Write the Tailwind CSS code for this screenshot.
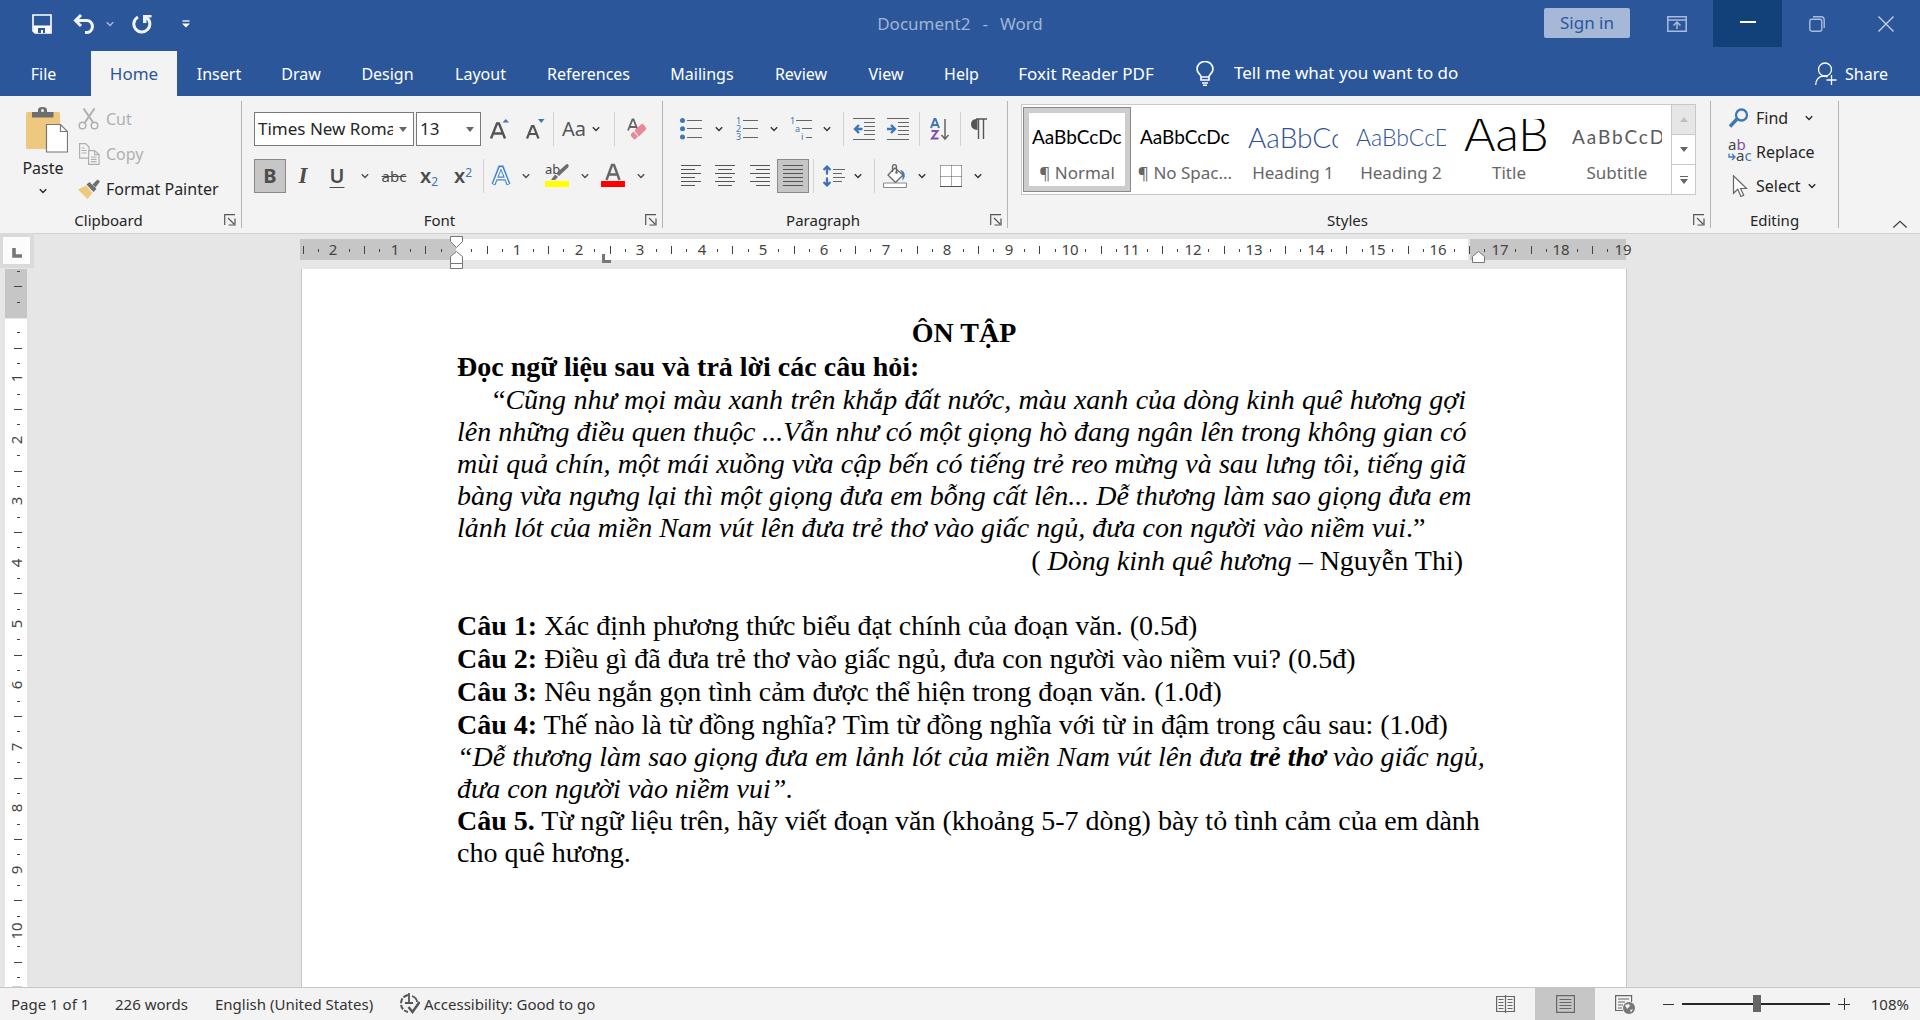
<!DOCTYPE html>
<html lang="en">
<head>
<meta charset="utf-8">
<title>Document2 - Word</title>
<script src="https://cdn.jsdelivr.net/npm/@tailwindcss/browser@4"></script>
</head>
<body class="h-screen overflow-hidden flex flex-col bg-[#e6e6e6] text-[#262626] text-[16px] leading-5 font-['Noto_Sans',sans-serif]">

<svg class="hidden">
  <symbol id="chev" viewBox="0 0 8 6"><path d="M.8 1.2 4 4.4 7.2 1.2" fill="none" stroke="currentColor" stroke-width="1.4"/></symbol>
  <symbol id="launch" viewBox="0 0 12 12"><path d="M.7 11V.7H11M4 4l6 6M11 4.5V11H4.5" fill="none" stroke="#555" stroke-width="1.2"/></symbol>
</svg>

<header class="bg-[#2b579a] text-white">
  <div class="h-[51px] flex items-start">
    <div class="flex-1 flex items-center h-[48px]">
      <button aria-label="Save" class="ml-8"><svg class="w-5 h-5" viewBox="0 0 20 20"><path d="M1 1h18v18H3l-2-2z" fill="none" stroke="#fff" stroke-width="1.6"/><path d="M1.5 11.500H18.500V19H3L1.500 17z" fill="#fff"/><path d="M6 19v-5h7v5h-2v-3H9v3z" fill="#2b579a"/></svg></button>
      <button aria-label="Undo" class="ml-[21px]"><svg class="w-[22px] h-5" viewBox="0 0 22 20"><path d="M8 1 2.500 6.500 8 12M3 6.500h11a5 5.500 0 0 1 0 12h-2" fill="none" stroke="#f0f3f8" stroke-width="3"/></svg></button>
      <button aria-label="Undo options" class="ml-[11px]"><svg class="w-2 h-1.5 text-[#a9bcdb]"><use href="#chev"/></svg></button>
      <button aria-label="Redo" class="ml-[18px]"><svg class="w-5 h-5" viewBox="0 0 20 20"><path d="M6 3a8 8 0 1 0 8.500.5" fill="none" stroke="#f0f3f8" stroke-width="3"/><path d="M11 1h8.500v2.500h-5V9H11z" fill="#f0f3f8"/></svg></button>
      <button aria-label="Customize Quick Access Toolbar" class="ml-[30px]"><svg class="w-2 h-2" viewBox="0 0 8 8"><path d="M.5 1h7" stroke="#fff" stroke-width="1.300"/><path d="M0 3.500h8L4 7.500z" fill="#fff"/></svg></button>
    </div>
    <div class="h-[48px] flex items-center gap-3 text-[17px] text-[#a0b4d5]"><span>Document2</span><span>-</span><span>Word</span></div>
    <div class="flex-1 flex justify-end">
      <button class="w-[86px] h-[30px] mt-2 mr-[11px] rounded-xs bg-[#a5b8d8] text-[#2b579a] text-[17px]">Sign in</button>
      <button aria-label="Ribbon display options" class="w-[72px] h-[47px] flex items-center justify-center"><svg class="w-5 h-4" viewBox="0 0 20 16"><path d="M.8.800h18.400v14.400H.8zM1 4h18M10 13V6.500M6.500 9.500 10 6l3.500 3.500" fill="none" stroke="#a9bcdb" stroke-width="1.500"/></svg></button>
      <button aria-label="Minimize" class="w-[69px] h-[47px] bg-[#124078] flex items-center justify-center"><span class="w-4 h-0.5 mb-1 bg-white"></span></button>
      <button aria-label="Restore" class="w-[69px] h-[47px] flex items-center justify-center"><svg class="w-4 h-4" viewBox="0 0 16 16"><rect x=".8" y="3.200" width="12" height="12" rx="2" fill="none" stroke="#a9bcdb" stroke-width="1.400"/><path d="M4 .8h8a3.200 3.200 0 0 1 3.200 3.200v8" fill="none" stroke="#a9bcdb" stroke-width="1.400"/></svg></button>
      <button aria-label="Close" class="w-[69px] h-[47px] flex items-center justify-center"><svg class="w-4 h-4" viewBox="0 0 16 16"><path d="M.5.500l15 15M15.500.500l-15 15" stroke="#c3d0e5" stroke-width="1.400"/></svg></button>
    </div>
  </div>
  <nav class="h-[45px] flex items-center">
    <button class="w-[91px] h-full pr-1">File</button>
    <button class="w-[86px] h-full bg-[#f3f3f3] text-[#2b579a] text-[17px]">Home</button>
    <button class="w-[84px] h-full">Insert</button>
    <button class="w-[80px] h-full">Draw</button>
    <button class="w-[93px] h-full">Design</button>
    <button class="w-[93px] h-full">Layout</button>
    <button class="w-[123px] h-full">References</button>
    <button class="w-[104px] h-full">Mailings</button>
    <button class="w-[94px] h-full">Review</button>
    <button class="w-[76px] h-full">View</button>
    <button class="w-[75px] h-full">Help</button>
    <button class="w-[174px] h-full whitespace-nowrap text-[17px]">Foxit Reader PDF</button>
    <label for="tell" class="pl-[23px] pr-5"><svg class="w-[18px] h-[25px]" viewBox="0 0 18 25"><path d="M5 19v-3.500C4.500 13 1 12 1 8a8 7.500 0 0 1 16 0c0 4-3.500 5-4 7.500V19zM5 16h8M6 22h6M7 24.200h4" fill="none" stroke="#fff" stroke-width="1.600"/></svg></label>
    <input id="tell" aria-label="Tell me" placeholder="Tell me what you want to do" class="w-[260px] h-full pb-0.5 text-[17px] bg-transparent outline-none placeholder:text-white">
    <button class="ml-auto mr-8 flex items-center gap-2"><svg class="w-[22px] h-6" viewBox="0 0 22 24"><circle cx="10" cy="7.500" r="6.500" fill="none" stroke="#fff" stroke-width="1.300"/><path d="M.7 23c0-5 3-9 8-9 2 0 3 .5 4 1M16.500 13v10M11.500 18h10" fill="none" stroke="#fff" stroke-width="1.300"/></svg>Share</button>
  </nav>
</header>

<section aria-label="Ribbon" class="h-[138px] flex bg-[#f3f3f3] border-b border-[#d0d0d0] py-[5px]">
  <div class="w-[242px] border-r border-[#b5b5b5] flex flex-col">
    <div class="flex h-[105px] pl-5">
      <button class="w-[50px] flex flex-col items-center pt-1.5"><svg class="w-[42px] h-[46px] ml-1" viewBox="0 0 42 46"><rect y="5" width="34" height="37" rx="1.500" fill="#edc87e"/><path d="M6 5h6V3q0-3 4.500-3T21 3v2h6.500v5.500H6z" fill="#6e6e6e"/><circle cx="16.500" cy="3.500" r="1.500" fill="#f3f3f3"/><path d="M20.500 17.500h14l7 7v20.500h-21z" fill="#fff" stroke="#777" stroke-width="1.200"/><path d="M34.500 17.500v7h7" fill="none" stroke="#777" stroke-width="1.200"/></svg>
        <span class="mt-[5px] mr-1">Paste</span><svg class="w-2 h-1.5 mt-2.5 mr-1"><use href="#chev"/></svg></button>
      <div class="flex flex-col pl-2 pt-px">
        <button class="h-[35px] flex items-center gap-1.5 text-[#b0b0b0]"><svg class="w-[22px] h-[22px]" viewBox="0 0 22 22"><path d="M5.500.500 15.500 15M16.500.500 6.500 15" stroke="#b0b0b0" stroke-width="2"/><circle cx="4.500" cy="17.500" r="3.300" fill="none" stroke="#b0b0b0" stroke-width="1.500"/><circle cx="16.500" cy="17.500" r="3.300" fill="none" stroke="#b0b0b0" stroke-width="1.500"/></svg>Cut</button>
        <button class="h-[35px] flex items-center gap-1.5 text-[#b0b0b0]"><svg class="w-[22px] h-[22px]" viewBox="0 0 22 22"><g fill="#f3f3f3" stroke="#b0b0b0" stroke-width="1.200"><path d="M1.600.600h6l3.500 3.500v11H1.600z"/><path d="M10.600 7.600h6l4.500 4v9.800H10.600zM16.600 7.600v4h4.500M13 14h5.500M13 16.300h5.500M13 18.600h5.500M3.500 5h3M3.500 7.500h5M3.500 10h5"/></g></svg>Copy</button>
        <button class="h-[35px] flex items-center gap-1.5 whitespace-nowrap"><svg class="w-[22px] h-[22px]" viewBox="0 0 22 22"><path d="M0 11.500 8 7.500l6.500 7.500L9.500 21z" fill="#edc87e"/><path d="m8.500 6.500 3-2.500 7 7-3 3z" fill="#6e6e6e"/><path d="m14.500 6.500 5-5 2.500 2-4.500 6z" fill="#6e6e6e"/></svg>Format Painter</button>
      </div>
    </div>
    <div class="flex items-center h-4 mt-1.5 pr-[5px] text-[15px]"><span class="flex-1 text-center pl-[5px] pr-3">Clipboard</span><button aria-label="Clipboard settings"><svg class="w-3 h-3"><use href="#launch"/></svg></button></div>
  </div>

  <div class="w-[421px] border-r border-[#b5b5b5] flex flex-col pl-3">
    <div class="flex flex-col gap-[13px] h-[105px] pt-[11px]">
      <div class="flex h-[34px]">
        <div class="w-[160px] mr-0.5 bg-white border border-[#7a7a7a] flex items-center pl-[3px] pr-1.5"><select aria-label="Font" class="flex-1 min-w-0 text-[17px] appearance-none outline-none bg-transparent text-clip"><option>Times New Roman</option></select><svg class="w-2 h-[5px] ml-1.5" viewBox="0 0 8 5"><path d="M0 0h8L4 5z" fill="#666"/></svg></div>
        <div class="w-[65px] bg-white border border-[#7a7a7a] flex items-center pl-[3px] pr-1.5"><select aria-label="Font size" class="flex-1 min-w-0 text-[17px] appearance-none outline-none bg-transparent"><option>13</option></select><svg class="w-2 h-[5px]" viewBox="0 0 8 5"><path d="M0 0h8L4 5z" fill="#666"/></svg></div>
        <button aria-label="Increase font size" class="w-[37px] flex items-center justify-center"><svg class="w-5 h-5" viewBox="0 0 20 20"><path d="m1 19.500 6-15h2l6 15M3.500 14.500h9" fill="none" stroke="#555" stroke-width="2.400"/><path d="M12.500 3.500h6.500L15.800 0z" fill="#3c78b4"/></svg></button>
        <button aria-label="Decrease font size" class="w-[34px] flex items-center justify-center"><svg class="w-5 h-5" viewBox="0 0 20 20"><path d="m2 19.500 5-12.500h1.500l5 12.500M4 15h8" fill="none" stroke="#555" stroke-width="2.200"/><path d="M13 0h6.500l-3.200 4z" fill="#3c78b4"/></svg></button>
        <span class="w-0.5 flex justify-center"><span class="w-px bg-[#d2d2d2]"></span></span>
        <button aria-label="Change case" class="w-[54px] flex items-center justify-center gap-1.5 text-[20px] text-[#555]">Aa<svg class="w-2 h-1.5 text-[#333]"><use href="#chev"/></svg></button>
        <span class="w-3 flex justify-center"><span class="w-px bg-[#d2d2d2]"></span></span>
        <button aria-label="Clear formatting" class="w-[34px] flex items-center justify-center"><svg class="w-5 h-[22px]" viewBox="0 0 20 22"><path d="m1 12.500 4.500-11h1l4 10M3 9h6" fill="none" stroke="#666" stroke-width="1.800"/><path d="m7.500 12.500 7-6.500q1.500-.5 2 .5l2.500 3q.5 1 0 2l-7 7z" fill="#e8899a"/><path d="m6.500 13.500-2.500 2.500q-.5 1 0 2l2.500 3q1 .5 2 0l2.500-2.500z" fill="#e8899a"/></svg></button>
      </div>
      <div class="flex h-[34px] text-[#4d4d4d]">
        <button aria-label="Bold" class="w-8 bg-[#c6c6c6] border border-[#8a8a8a] text-[20px] font-bold">B</button>
        <button aria-label="Italic" class="w-[34px] text-[23px] font-bold italic font-['Liberation_Serif',serif]">I</button>
        <button aria-label="Underline" class="w-[34px] text-[20px] font-semibold underline underline-offset-4 decoration-1">U</button>
        <button aria-label="Underline options" class="w-[22px] flex items-center justify-center"><svg class="w-2 h-1.5"><use href="#chev"/></svg></button>
        <button aria-label="Strikethrough" class="w-9 text-[15px] line-through">abc</button>
        <button aria-label="Subscript" class="w-[34px] text-[20px] font-semibold">x<sub class="text-[12px] font-normal text-[#3c78b4]">2</sub></button>
        <button aria-label="Superscript" class="w-[34px] text-[20px] font-semibold">x<sup class="text-[12px] font-normal text-[#3c78b4]">2</sup></button>
        <span class="w-1.5 flex justify-center"><span class="w-px bg-[#d2d2d2]"></span></span>
        <button aria-label="Text effects" class="w-[30px] flex items-center justify-center"><svg class="w-5 h-[22px]" viewBox="0 0 20 22"><path d="m2.500 19.500 6.500-17h2l6.500 17M5.500 13.500h9" fill="none" stroke="#b7d1ee" stroke-width="5"/><path d="m2.500 19.500 6.500-17h2l6.500 17M5.500 13.500h9" fill="none" stroke="#3d7cc4" stroke-width="3.600"/><path d="m2.800 19 6.400-16h1.600l6.400 16M5.500 13.500h9" fill="none" stroke="#fff" stroke-width="1.600"/></svg></button>
        <button aria-label="Text effects options" class="w-5 flex items-center justify-center"><svg class="w-2 h-1.5"><use href="#chev"/></svg></button>
        <button aria-label="Highlight" class="w-[42px] flex flex-col items-center pt-1"><svg class="w-6 h-6" viewBox="0 0 24 24"><text x="0" y="11" class="text-[13px] fill-[#444]">ab</text><path d="M21 1.500q2-1 2.500.5t-.5 2.500L14 13l-3-2.500z" fill="#6e6e6e"/><path d="m10 11.500 3 2.500-3 3H6z" fill="#6e6e6e"/><path d="M0 18h24v6H0z" fill="#ff0"/></svg></button>
        <button aria-label="Highlight options" class="w-3.5 flex items-center justify-center"><svg class="w-2 h-1.5"><use href="#chev"/></svg></button>
        <button aria-label="Font color" class="w-[42px] flex flex-col items-center pt-1"><svg class="w-6 h-6" viewBox="0 0 24 24"><path d="m5.500 17 5.500-15h2l5.500 15M7.500 11.500h9" fill="none" stroke="#666" stroke-width="2.400"/><path d="M0 18h24v6H0z" fill="#f00"/></svg></button>
        <button aria-label="Font color options" class="w-3.5 flex items-center justify-center"><svg class="w-2 h-1.5"><use href="#chev"/></svg></button>
      </div>
    </div>
    <div class="flex items-center h-4 mt-1.5 pr-[5px] text-[15px]"><span class="flex-1 text-center pr-5">Font</span><button aria-label="Font settings"><svg class="w-3 h-3"><use href="#launch"/></svg></button></div>
  </div>

  <div class="w-[345px] border-r border-[#b5b5b5] flex flex-col pl-3">
    <div class="flex flex-col gap-[13px] h-[105px] pt-[11px]">
      <div class="flex h-[34px] text-[#333]">
        <button aria-label="Bullets" class="w-8 flex items-center justify-center"><svg class="w-[22px] h-[22px]" viewBox="0 0 22 22"><g fill="#3c78b4"><circle cx="2.500" cy="2.500" r="2.500"/><circle cx="2.500" cy="10.700" r="2.500"/><circle cx="2.500" cy="19" r="2.500"/></g><path d="M7 2.500h15M7 10.500h15M7 19.500h15" stroke="#666"/></svg></button>
        <button aria-label="Bullet options" class="w-6 flex items-center justify-center"><svg class="w-2 h-1.5"><use href="#chev"/></svg></button>
        <button aria-label="Numbering" class="w-8 flex items-center justify-center"><svg class="w-[22px] h-[22px] overflow-visible" viewBox="0 0 22 22"><g class="text-[9px] fill-[#3c78b4]"><text y="6">1</text><text y="14">2</text><text y="22">3</text></g><path d="M7 2.500h15M7 10.500h15M7 19.500h15" stroke="#666"/></svg></button>
        <button aria-label="Numbering options" class="w-[22px] flex items-center justify-center"><svg class="w-2 h-1.5"><use href="#chev"/></svg></button>
        <button aria-label="Multilevel list" class="w-8 flex items-center justify-center"><svg class="w-[22px] h-[22px] overflow-visible" viewBox="0 0 22 22"><g class="text-[9px] fill-[#3c78b4]"><text y="6">1</text><text x="5" y="14">a</text><text x="11" y="22">i</text></g><path d="M6 2.500h16M12 10.500h10M16 19.500h6" stroke="#666"/></svg></button>
        <button aria-label="Multilevel options" class="w-5 flex items-center justify-center"><svg class="w-2 h-1.5"><use href="#chev"/></svg></button>
        <span class="w-3 flex justify-center"><span class="w-px bg-[#d2d2d2]"></span></span>
        <button aria-label="Decrease indent" class="w-[30px] flex items-center justify-center"><svg class="w-[22px] h-[22px]" viewBox="0 0 22 22"><path d="M0 .5h22M11 4.500h11M11 8.500h11M11 12.500h11M11 16.500h11M0 21.500h22" stroke="#666"/><path d="M9.500 11H2M6 7l-4 4 4 4" fill="none" stroke="#3c78b4" stroke-width="2.400"/></svg></button>
        <button aria-label="Increase indent" class="w-[38px] flex items-center justify-center"><svg class="w-[22px] h-[22px]" viewBox="0 0 22 22"><path d="M0 .5h22M11 4.500h11M11 8.500h11M11 12.500h11M11 16.500h11M0 21.500h22" stroke="#666"/><path d="M0 11h7.500M4 7l4 4-4 4" fill="none" stroke="#3c78b4" stroke-width="2.400"/></svg></button>
        <span class="w-1 flex justify-center"><span class="w-px bg-[#d2d2d2]"></span></span>
        <button aria-label="Sort" class="w-[38px] flex items-center justify-center"><svg class="w-5 h-6" viewBox="0 0 20 24"><path d="m1 11 3.500-9h1L9 11M2.500 8h5" fill="none" stroke="#3c78b4" stroke-width="2"/><path d="M1.500 14h6l-5.500 7.500h6.500" fill="none" stroke="#8250a8" stroke-width="2"/><path d="M15 2v20M11.500 18l3.500 4 3.500-4" fill="none" stroke="#666" stroke-width="1.500"/></svg></button>
        <span class="w-0.5 flex justify-center"><span class="w-px bg-[#d2d2d2]"></span></span>
        <button aria-label="Show formatting marks" class="w-9 flex items-center justify-center"><svg class="w-4 h-[22px]" viewBox="0 0 16 22"><path d="M6.500 1v11Q0 11.500 0 6.200T6.500 1z" fill="#555"/><path d="M5 1h11M7.500 1v20M12.500 1v20" stroke="#555" stroke-width="1.400"/></svg></button>
      </div>
      <div class="flex h-[34px] text-[#333]">
        <button aria-label="Align left" class="w-8 flex items-center justify-center"><svg class="w-5 h-[22px]" viewBox="0 0 20 22"><path d="M0 .5h20M0 4.500h14M0 8.500h20M0 12.500h14M0 16.500h20M0 20.500h14" stroke="#555"/></svg></button>
        <button aria-label="Center" class="w-9 flex items-center justify-center"><svg class="w-5 h-[22px]" viewBox="0 0 20 22"><path d="M0 .5h20M3 4.500h14M0 8.500h20M3 12.500h14M0 16.500h20M3 20.500h14" stroke="#555"/></svg></button>
        <button aria-label="Align right" class="w-[34px] flex items-center justify-center"><svg class="w-5 h-[22px]" viewBox="0 0 20 22"><path d="M0 .5h20M6 4.500h14M0 8.500h20M6 12.500h14M0 16.500h20M6 20.500h14" stroke="#555"/></svg></button>
        <button aria-label="Justify" class="w-8 flex items-center justify-center bg-[#c6c6c6] border border-[#8a8a8a]"><svg class="w-5 h-[22px]" viewBox="0 0 20 22"><path d="M0 .5h20M0 4.500h20M0 8.500h20M0 12.500h20M0 16.500h20M0 20.500h20" stroke="#555"/></svg></button>
        <span class="w-2 flex justify-center"><span class="w-px bg-[#d2d2d2]"></span></span>
        <button aria-label="Line spacing" class="w-[34px] flex items-center justify-center"><svg class="w-[22px] h-[22px]" viewBox="0 0 22 22"><path d="M4 9.500V2M.5 5 4 1.500 7.500 5M4 12.500V20M.5 17 4 20.500 7.500 17" fill="none" stroke="#3f6fb8" stroke-width="2.200"/><path d="M10 4.500h12M10 8.500h9M10 12.500h12M10 16.500h9" stroke="#666"/></svg></button>
        <button aria-label="Line spacing options" class="w-3.5 flex items-center justify-center"><svg class="w-2 h-1.5"><use href="#chev"/></svg></button>
        <span class="w-[18px] flex justify-center"><span class="w-px bg-[#d2d2d2]"></span></span>
        <button aria-label="Shading" class="w-6 flex items-center justify-center"><svg class="w-6 h-6" viewBox="0 0 24 24"><path d="M12 4 20 11l-7.500 7.500L5 11z" fill="#fff" stroke="#666" stroke-width="1.300"/><path d="M9.500 8V3q0-2.300 2-2.300T13.500 3v5" fill="none" stroke="#666" stroke-width="1.300"/><circle cx="13.500" cy="8.500" r="1.300" fill="#666"/><path d="M17 6q5 .5 4.800 6.500l-2.300 4.500V10z" fill="#3c78b4"/><path d="M.5 19h23v4.500H.5z" fill="#fff" stroke="#888"/></svg></button>
        <button aria-label="Shading options" class="w-[30px] flex items-center justify-center"><svg class="w-2 h-1.5"><use href="#chev"/></svg></button>
        <button aria-label="Borders" class="w-7 flex items-center justify-center"><svg class="w-[22px] h-[22px]" viewBox="0 0 22 22"><path d="M1 1h20v20H1z" fill="#fff"/><path d="M.5.500h21M.5.500v21M21.500.500v21M11.500 .5v21M.5 11.500h21" fill="none" stroke="#555" stroke-dasharray="1 1"/><path d="M0 21.500h22" stroke="#555"/></svg></button>
        <button aria-label="Border options" class="w-[26px] flex items-center justify-center"><svg class="w-2 h-1.5"><use href="#chev"/></svg></button>
      </div>
    </div>
    <div class="flex items-center h-4 mt-1.5 pr-[5px] text-[15px]"><span class="flex-1 text-center pr-[19px]">Paragraph</span><button aria-label="Paragraph settings"><svg class="w-3 h-3"><use href="#launch"/></svg></button></div>
  </div>

  <div class="w-[703px] border-r border-[#b5b5b5] flex flex-col pl-[13px]">
    <div class="h-[105px] pt-[3px]">
      <div class="h-[91px] w-[675px] flex bg-white border border-[#c8c8c8] text-[17px] text-[#666]">
        <button class="w-[108px] h-[85px] my-0.5 ml-px border border-[#8a8a8a] bg-[#cfcdcb] p-[5px]"><span class="h-full bg-white flex flex-col items-center gap-2 pt-1.5"><span class="h-9 w-[90px] overflow-hidden whitespace-nowrap flex items-center text-left text-[19px] text-black font-['Lato',sans-serif]">AaBbCcDc</span><span class="whitespace-nowrap">¶ Normal</span></span></button>
        <button class="w-[108px] flex flex-col items-center gap-2 pt-3.5"><span class="h-9 w-[90px] overflow-hidden whitespace-nowrap flex items-center text-[19px] text-black font-['Lato',sans-serif]">AaBbCcDc</span><span class="whitespace-nowrap">¶ No Spac...</span></button>
        <button class="w-[108px] flex flex-col items-center gap-2 pt-3.5"><span class="h-9 w-[90px] overflow-hidden whitespace-nowrap flex items-center text-[28px] text-[#2f5496] font-light font-['Lato',sans-serif]">AaBbCc</span><span>Heading 1</span></button>
        <button class="w-[108px] flex flex-col items-center gap-2 pt-3.5"><span class="h-9 w-[90px] overflow-hidden whitespace-nowrap flex items-center text-[23px] text-[#2f5496] font-light font-['Lato',sans-serif]">AaBbCcD</span><span>Heading 2</span></button>
        <button class="w-[108px] flex flex-col items-center gap-2 pt-3.5"><span class="h-9 w-[90px] overflow-hidden whitespace-nowrap flex items-end text-[48px] leading-11 text-black font-light font-['Lato',sans-serif]">AaB</span><span>Title</span></button>
        <button class="w-[108px] flex flex-col items-center gap-2 pt-3.5"><span class="h-9 w-[90px] overflow-hidden whitespace-nowrap flex items-center text-[19px] tracking-widest text-[#5a5a5a] font-['Lato',sans-serif]">AaBbCcD</span><span>Subtitle</span></button>
        <div class="flex-1 flex flex-col border-l border-[#c8c8c8]">
          <button aria-label="Scroll up" class="flex-1 flex items-center justify-center bg-[#e6e6e6]"><svg class="w-2 h-[5px]" viewBox="0 0 8 5"><path d="M0 5h8L4 0z" fill="#c0c0c0"/></svg></button>
          <button aria-label="Scroll down" class="flex-1 flex items-center justify-center border-y border-[#c8c8c8]"><svg class="w-2 h-[5px]" viewBox="0 0 8 5"><path d="M0 0h8L4 5z" fill="#666"/></svg></button>
          <button aria-label="More styles" class="flex-1 flex items-center justify-center"><svg class="w-2 h-2" viewBox="0 0 8 8"><path d="M0 .5h8" stroke="#666"/><path d="M0 3h8L4 8z" fill="#666"/></svg></button>
        </div>
      </div>
    </div>
    <div class="flex items-center h-4 mt-1.5 pr-[5px] text-[15px]"><span class="flex-1 text-center pr-[19px]">Styles</span><button aria-label="Styles settings"><svg class="w-3 h-3"><use href="#launch"/></svg></button></div>
  </div>

  <div class="w-[128px] border-r border-[#b5b5b5] flex flex-col pl-[17px]">
    <div class="h-[105px] flex flex-col">
      <button class="h-[33px] flex items-center"><svg class="w-[22px] h-5 mr-1.5" viewBox="0 0 22 20"><circle cx="13.500" cy="7" r="5.500" fill="none" stroke="#3c78b4" stroke-width="2.300"/><path d="m9 11-7 7.500" stroke="#3c78b4" stroke-width="3.400"/></svg>Find<svg class="w-2 h-1.5 ml-[17px]"><use href="#chev"/></svg></button>
      <button class="h-[35px] flex items-center"><svg class="w-6 h-6 mr-1 overflow-visible" viewBox="0 0 24 24"><g class="text-[15px]"><text y="10" class="fill-[#444]">a<tspan class="fill-[#8250a8]">b</tspan></text><text x="8" y="21" class="fill-[#444]">a<tspan class="fill-[#3c78b4]">c</tspan></text></g><path d="M1 13.500v3.500h5M4 14l3 3-3 3" fill="none" stroke="#3c78b4" stroke-width="1.300"/></svg>Replace</button>
      <button class="h-[33px] flex items-center"><svg class="w-[22px] h-[22px] mr-1.5" viewBox="0 0 22 22"><path d="M5.500.800v17.500l4.200-4 3.300 7.200 2.700-1.300-3.200-6.700h6z" fill="#fff" stroke="#666" stroke-width="1.200"/></svg>Select<svg class="w-2 h-1.5 ml-2"><use href="#chev"/></svg></button>
    </div>
    <div class="h-4 mt-1.5 leading-4 text-center text-[15px] pr-[17px]">Editing</div>
  </div>
  <button aria-label="Collapse the ribbon" class="ml-auto mr-3 mt-auto"><svg class="w-4 h-2" viewBox="0 0 16 9"><path d="m.5 8.500 7.500-7 7.500 7" fill="none" stroke="#444" stroke-width="1.500"/></svg></button>
</section>

<div class="h-[35px] flex pl-[3px] pr-[22px]">
  <button aria-label="Tab selector" class="w-[27px] h-[27px] mt-[3px] pt-1 bg-[#fcfcfc] outline-4 outline-[#dadada] flex items-center justify-center"><svg class="w-2.5 h-2.5" viewBox="0 0 10 10"><path d="M2 0v8h8" fill="none" stroke="#777" stroke-width="3.600"/></svg></button>
  <div class="flex-1"><svg id="hruler" class="block mx-auto w-[1326px] h-[35px] overflow-visible fill-[#444] text-[15px]" viewBox="0 0 1326 35"></svg></div>
</div>

<main class="flex-1 min-h-0 flex">
  <div class="w-[27px] pl-[5px] overflow-hidden"><svg id="vruler" class="block w-[22px] h-[760px] fill-[#444] text-[15px]" viewBox="0 0 22 760"></svg></div>
  <div class="flex-1 pr-[19px] overflow-hidden flex justify-center">
    <article lang="vi" class="w-[1326px] min-h-full bg-white border-x border-[#c6c6c6] pt-12 px-[155px] text-black text-[28px] leading-8 whitespace-nowrap font-['Liberation_Serif',serif]">
      <h1 class="text-center font-bold mb-0.5">ÔN TẬP</h1>
      <h2 class="font-bold mb-px">Đọc ngữ liệu sau và trả lời các câu hỏi:</h2>
      <p class="w-[1009px] mb-px">
        <span class="block pl-9 [text-align-last:justify]">“<i>Cũng như mọi màu xanh trên khắp đất nước, màu xanh của dòng kinh quê hương gợi</i></span>
        <i class="block [text-align-last:justify]">lên những điều quen thuộc ...Vẫn như có một giọng hò đang ngân lên trong không gian có</i>
        <i class="block [text-align-last:justify]">mùi quả chín, một mái xuồng vừa cập bến có tiếng trẻ reo mừng và sau lưng tôi, tiếng giã</i>
        <i class="block [text-align-last:justify]">bàng vừa ngưng lại thì một giọng đưa em bỗng cất lên... Dễ thương làm sao giọng đưa em</i>
        <span class="block"><i>lảnh lót của miền Nam vút lên đưa trẻ thơ vào giấc ngủ, đưa con người vào niềm vui</i>.”</span>
      </p>
      <p class="w-[1006px] text-right mb-[33px]">( <i>Dòng kinh quê hương</i> – Nguyễn Thi)</p>
      <div class="space-y-px">
        <p><b>Câu 1:</b> Xác định phương thức biểu đạt chính của đoạn văn. (0.5đ)</p>
        <p><b>Câu 2:</b> Điều gì đã đưa trẻ thơ vào giấc ngủ, đưa con người vào niềm vui? (0.5đ)</p>
        <p><b>Câu 3:</b> Nêu ngắn gọn tình cảm được thể hiện trong đoạn văn<i>.</i> (1.0đ)</p>
        <p><b>Câu 4:</b> Thế nào là từ đồng nghĩa? Tìm từ đồng nghĩa với từ in đậm trong câu sau: (1.0đ)</p>
      </div>
      <p><i>“Dễ thương làm sao giọng đưa em lảnh lót của miền Nam vút lên đưa <b>trẻ thơ</b> vào giấc ngủ,<br>đưa con người vào niềm vui”.</i></p>
      <p><b>Câu 5.</b> Từ ngữ liệu trên, hãy viết đoạn văn (khoảng 5-7 dòng) bày tỏ tình cảm của em dành<br>cho quê hương.</p>
    </article>
  </div>
</main>

<footer class="h-[33px] flex items-center bg-[#f3f3f3] border-t border-[#c6c6c6] pl-[11px] pr-[11px] text-[15px] text-[#333] whitespace-nowrap">
  <button class="w-[104px] text-left">Page 1 of 1</button>
  <button class="w-[100px] text-left">226 words</button>
  <button class="w-[185px] text-left">English (United States)</button>
  <button class="flex items-center gap-1"><svg class="w-5 h-[22px]" viewBox="0 0 20 22"><path d="M8 2Q1 4 1 10.500T8 19" fill="none" stroke="#555" stroke-width="2" stroke-dasharray="5 1.500"/><path d="M9 0v11M5 10h8M12 3q5 2 5 6" fill="none" stroke="#555" stroke-width="1.800"/><path d="m8.500 14 4 5 7-10" fill="none" stroke="#555" stroke-width="2.400"/></svg>Accessibility: Good to go</button>
  <div class="ml-auto flex items-center h-full">
    <button aria-label="Read mode" class="w-[59px] h-full flex items-center justify-center"><svg class="w-[19px] h-[18px]" viewBox="0 0 19 18"><path d="M9.500 1.500H.6v15h8.900h8.900v-15zM9.500 0v18M2.500 4.500h5M2.500 7.500h5M2.500 10.500h5M2.500 13.500h5M11.500 4.500h5M11.500 7.500h5M11.500 10.500h5M11.500 13.500h5" fill="none" stroke="#666" stroke-width="1.200"/></svg></button>
    <button aria-label="Print layout" class="w-[60px] h-full flex items-center justify-center bg-[#c6c6c6]"><svg class="w-[19px] h-[18px]" viewBox="0 0 19 18"><path d="M.6.600h17.800v16.800H.6zM3.500 4.500h12M3.500 7.500h12M3.500 10.500h12M3.500 13.500h12" fill="none" stroke="#666" stroke-width="1.200"/></svg></button>
    <button aria-label="Web layout" class="w-[60px] h-full flex items-center justify-center"><svg class="w-5 h-[19px]" viewBox="0 0 20 19"><path d="M8 15.500H.6V.600h16V7M3 4h11M3 7h7M3 10h5M3 13h4" fill="none" stroke="#666" stroke-width="1.200"/><circle cx="14" cy="13" r="6" fill="#777"/><path d="m10 10 4-1 1 2-3 3zM15 15l3-1-2 3.500z" fill="#f3f3f3"/></svg></button>
    <button aria-label="Zoom out" class="w-3 ml-[7px] flex justify-center"><span class="w-[11px] h-px bg-[#333]"></span></button>
    <input type="range" aria-label="Zoom" min="0" max="100" value="51" class="w-[148px] h-[18px] mx-2 appearance-none bg-transparent [&::-webkit-slider-runnable-track]:h-0.5 [&::-webkit-slider-runnable-track]:bg-[#262626] [&::-webkit-slider-thumb]:appearance-none [&::-webkit-slider-thumb]:w-2 [&::-webkit-slider-thumb]:h-[17px] [&::-webkit-slider-thumb]:-mt-2 [&::-webkit-slider-thumb]:bg-[#666]">
    <button aria-label="Zoom in" class="w-3"><svg class="w-3 h-3" viewBox="0 0 12 12"><path d="M0 6.500h12M6.500 0v12" stroke="#333"/></svg></button>
    <button class="w-[59px] text-right">108%</button>
  </div>
</footer>

<script>
const NS = 'http://www.w3.org/2000/svg';
const CM = 61.4;
function add(svg, tag, attrs, text) {
  const el = document.createElementNS(NS, tag);
  for (const k in attrs) el.setAttribute(k, attrs[k]);
  if (text !== undefined) el.textContent = text;
  svg.appendChild(el);
  return el;
}
const h = document.getElementById('hruler'), h0 = 155;
add(h, 'rect', {x: -1, y: 5, width: h0 + 1, height: 21, fill: '#c6c6c6'});
add(h, 'rect', {x: h0, y: 5, width: 1012, height: 21, fill: '#fff'});
add(h, 'rect', {x: 1169, y: 5, width: 156, height: 21, fill: '#c6c6c6'});
for (let q = -10; q <= 76; q++) {
  const x = Math.round(h0 + q * CM / 4);
  if (q === 0) continue;
  if (q % 4 === 0) add(h, 'text', {x: x, y: 21, 'text-anchor': 'middle'}, Math.abs(q / 4));
  else if (q % 2 === 0) add(h, 'rect', {x: x, y: 12, width: 1, height: 8});
  else add(h, 'rect', {x: x, y: 15, width: 1, height: 3});
}
const mark = {fill: '#fff', stroke: '#777'};
add(h, 'path', {d: 'M149.500 2.500h12v5l-6 6-6-6z', ...mark});
add(h, 'path', {d: 'M149.500 29.500v-7l6-5 6 5v7zM149.500 29.500h12v5h-12z', ...mark});
add(h, 'path', {d: 'M1171.500 28.500v-6l6-5 6 5v6z', ...mark});
add(h, 'path', {d: 'M301 20h3v6h6v3h-9z', fill: '#777'});

const v = document.getElementById('vruler'), v0 = 48;
add(v, 'rect', {x: 0, y: 0, width: 22, height: 49, fill: '#c6c6c6'});
add(v, 'rect', {x: 0, y: 50, width: 22, height: 710, fill: '#fff'});
for (let q = -3; q <= 46; q++) {
  const y = Math.round(v0 + q * CM / 4);
  if (q === 0) continue;
  if (q % 4 === 0) add(v, 'text', {x: 0, y: 0, 'text-anchor': 'middle', transform: `translate(17 ${y}) rotate(-90)`}, q / 4);
  else if (q % 2 === 0) add(v, 'rect', {x: 9, y: y, width: 8, height: 1});
  else add(v, 'rect', {x: 12, y: y, width: 3, height: 1});
}
</script>
</body>
</html>
